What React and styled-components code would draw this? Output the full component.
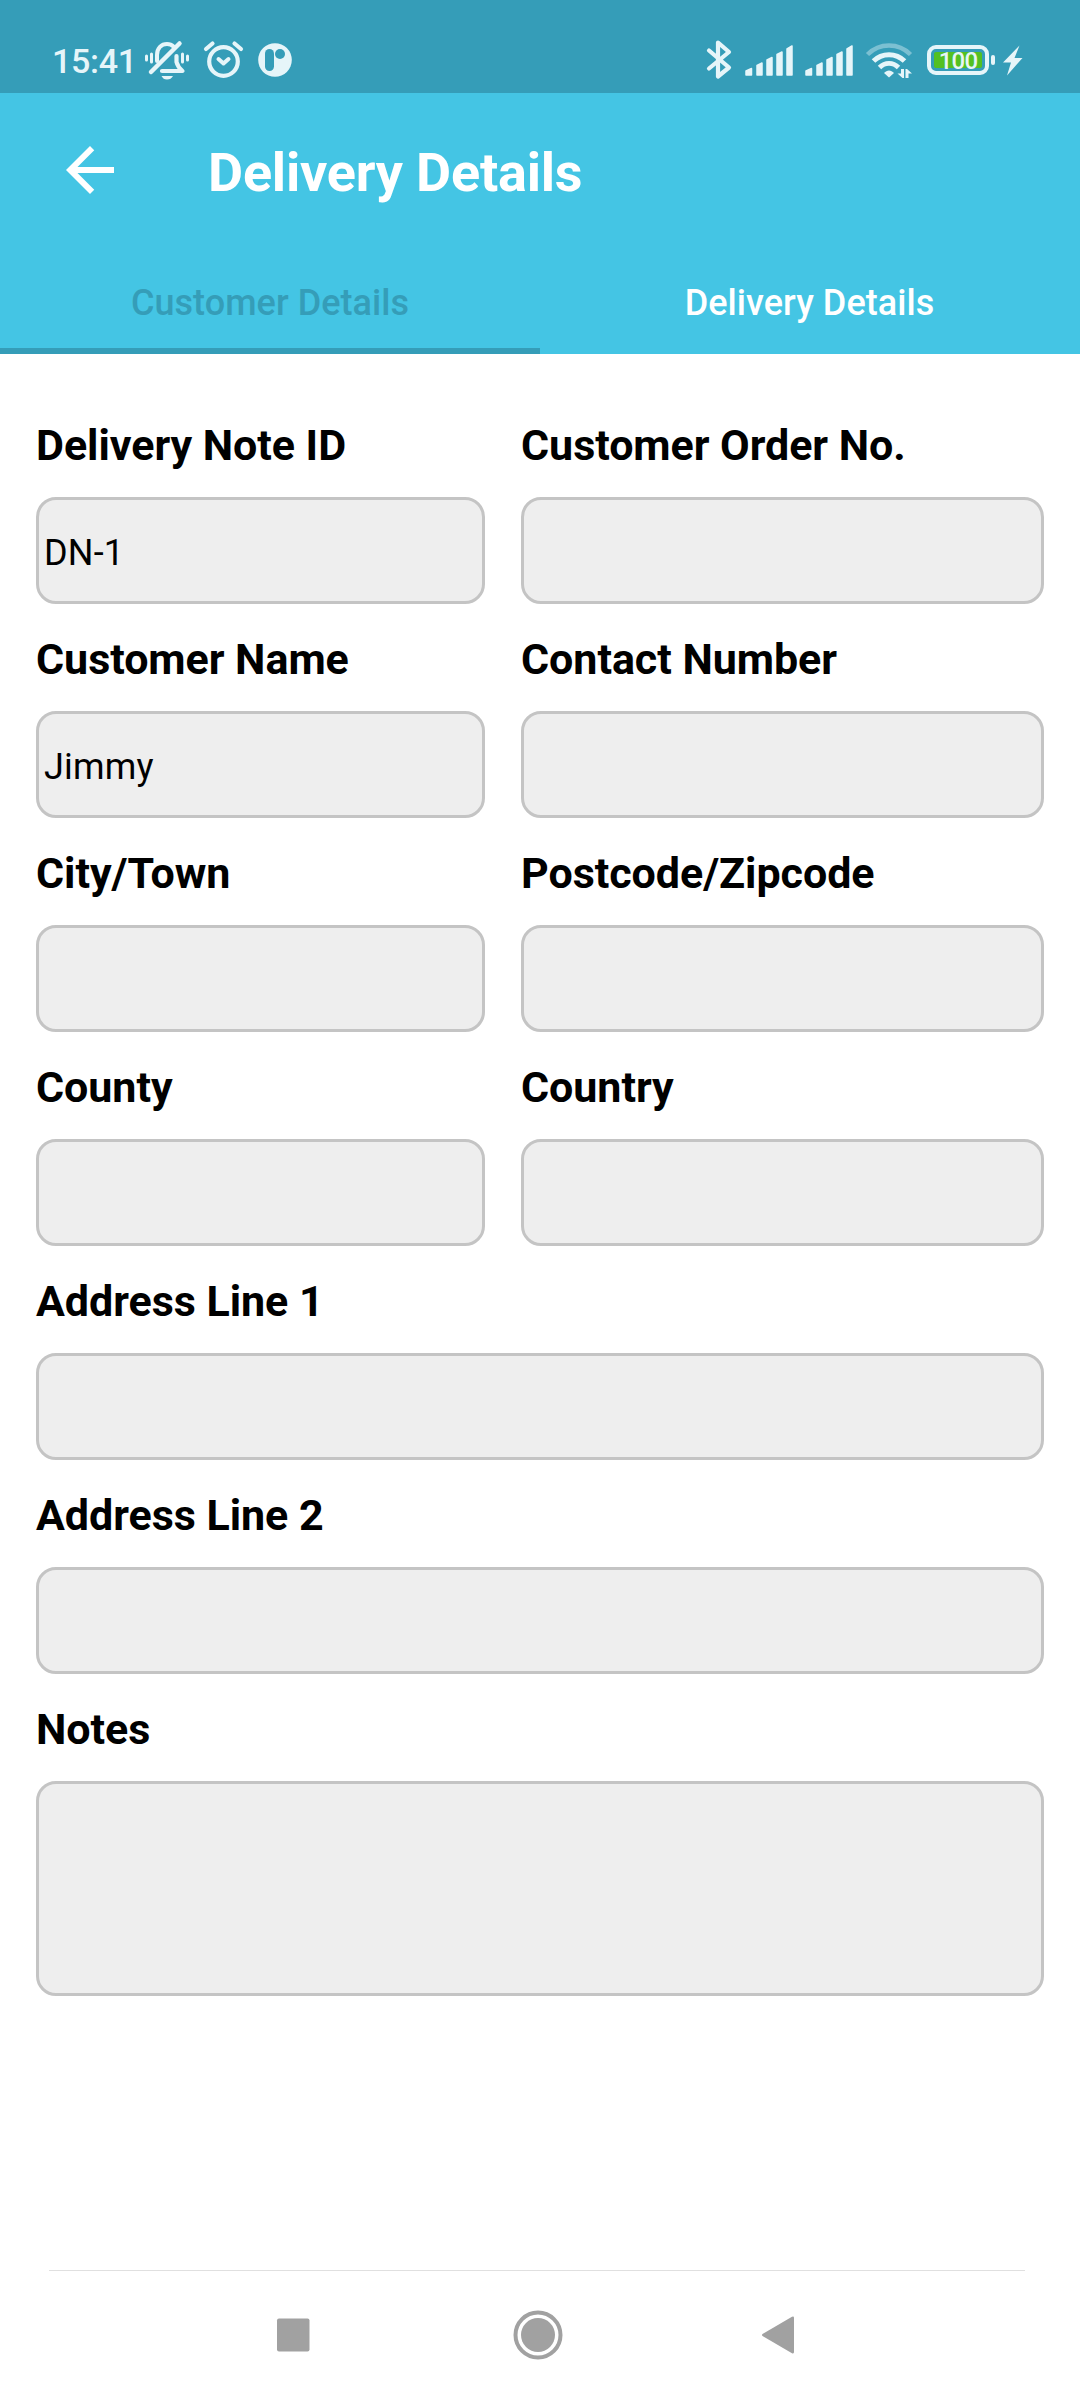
import React, {useState} from 'react'
import styled, {createGlobalStyle} from 'styled-components'

const GlobalStyle = createGlobalStyle`
  * {
    box-sizing: border-box;
  }
  body {
    margin: 0;
    background: #fff;
    font-family: Roboto, "Liberation Sans", sans-serif;
  }
`
const Screen = styled.div`
  display: flex;
  flex-direction: column;
  width: 1080px;
  height: 2400px;
  overflow: hidden;
`
const StatusBar = styled.div`
  display: flex;
  align-items: flex-start;
  justify-content: space-between;
  height: 93px;
  padding: 40px 57px 0 52px;
  background: #359db8;
  color: #e6f5f9;
`
const StatusGroup = styled.div`
  display: flex;
  align-items: flex-start;
`
const Clock = styled.span`
  width: 93px;
  font-size: 34px;
  font-weight: 500;
  line-height: 42px;
  letter-spacing: -0.3px;
`
const StatusIcon = styled.svg`
  display: block;
  flex: none;
  height: 40px;
  width: ${({$width}) => $width}px;
  margin-right: ${({$gap = 0}) => $gap}px;
  overflow: visible;
`
const Battery = styled.div`
  position: relative;
  display: flex;
  align-items: center;
  justify-content: center;
  width: 62px;
  height: 30px;
  margin: 5px 14px 0 0;
  border: 4px solid #e6f5f9;
  border-radius: 9px;

  &::after {
    content: "";
    position: absolute;
    right: -10px;
    width: 4px;
    height: 10px;
    border-radius: 2px;
    background: #e6f5f9;
  }
`
const Charge = styled.div`
  width: 48px;
  height: 16px;
  border-radius: 2px;
  background: #53c022;
  color: #e6f5f9;
  font-size: 24px;
  font-weight: 500;
  line-height: 18px;
  letter-spacing: -0.8px;
  text-align: center;
`
const Header = styled.header`
  height: 261px;
  background: #44c5e4;
  color: #fff;
`
const TitleRow = styled.div`
  display: flex;
  align-items: center;
  height: 154px;
  padding-left: 54px;
`
const BackButton = styled.button`
  display: flex;
  width: 72px;
  height: 72px;
  padding: 0;
  border: 0;
  background: none;
  color: inherit;
  cursor: pointer;
`
const Title = styled.h1`
  margin: 6px 0 0 82px;
  font-size: 54px;
  font-weight: 700;
  line-height: 64px;
  letter-spacing: -0.2px;
`
const Tabs = styled.div`
  display: flex;
  height: 107px;
`
const Tab = styled.button`
  flex: none;
  width: 50%;
  padding: 10px ${({$active}) => $active ? 0 : 1}px 0 0;
  border: 0;
  border-bottom: 6px solid ${({$active}) => $active ? '#359db8' : 'transparent'};
  background: none;
  color: ${({$active}) => $active ? '#359db8' : '#fff'};
  font-family: inherit;
  font-size: 36px;
  font-weight: 500;
  letter-spacing: 0.05px;
  cursor: pointer;
`
const Form = styled.main`
  flex: 1;
  padding: 36px 36px 0;
`
const Row = styled.div`
  display: grid;
  grid-template-columns: ${({$single}) => $single ? '1fr' : '449px 523px'};
  column-gap: 36px;
`
const Label = styled.div`
  height: 107px;
  padding-top: 3px;
  color: #000;
  font-size: 43px;
  font-weight: 700;
  line-height: 104px;
  letter-spacing: -0.04px;
  white-space: nowrap;
`
const Value = styled.div`
  display: flex;
  align-items: center;
  height: ${({$tall}) => $tall ? 215 : 107}px;
  padding: 4px 5px 0;
  border: 3px solid #c4c4c4;
  border-radius: 20px;
  background: #eee;
  color: #000;
  font-size: 36px;
  letter-spacing: 0.2px;
`
const NavBar = styled.nav`
  display: flex;
  align-items: center;
  height: 130px;
  margin: 0 55px 0 49px;
  padding: 0 230px 1px 227px;
  border-top: 1px solid #e0e0e0;
  justify-content: space-between;
  color: #a1a1a1;
`
const NavIcon = styled.svg`
  display: block;
  width: ${({$size}) => $size}px;
  height: 50px;
`

const rows = [
    [{label: 'Delivery Note ID', value: 'DN-1'}, {label: 'Customer Order No.'}],
    [{label: 'Customer Name', value: 'Jimmy'}, {label: 'Contact Number'}],
    [{label: 'City/Town'}, {label: 'Postcode/Zipcode'}],
    [{label: 'County'}, {label: 'Country'}],
    [{label: 'Address Line 1'}],
    [{label: 'Address Line 2'}],
    [{label: 'Notes', tall: true}],
]

const tabs = ['Customer Details', 'Delivery Details']

function MutedBell() {
    return (
        <StatusIcon $width={44} $gap={15} viewBox="0 0 44 40" fill="none" stroke="currentColor" strokeLinecap="round" strokeLinejoin="round">
            <path d="M12 21V15C12 8 16.500 4 22 4C25 4 27 5 28.500 6.500" strokeWidth="4"/>
            <path d="M31.500 16V22C32.500 26 34.500 28.500 37.500 31H17" strokeWidth="4.200"/>
            <path d="M6 32L34.500 3.500" strokeWidth="4.500"/>
            <path d="M1.500 16V20M6.500 14V22M37.500 14V22M42.500 16V20" strokeWidth="3"/>
            <path d="M16.500 36H28C26.500 38.500 25 39.500 22 39.500S18 38.500 16.500 36Z" fill="currentColor" stroke="none"/>
        </StatusIcon>
    )
}

function AlarmClock() {
    return (
        <StatusIcon $width={39} $gap={14.5} viewBox="0 0 39 40" fill="none" stroke="currentColor" strokeLinecap="round" strokeLinejoin="round">
            <circle cx="19.500" cy="21.500" r="14.300" strokeWidth="4.200"/>
            <path d="M14.500 19L19.500 23.500L24.500 19" strokeWidth="4"/>
            <path d="M2 9L8.500 3.500M30.500 3.500L37 9" strokeWidth="4.200"/>
        </StatusIcon>
    )
}

function AppBadge() {
    return (
        <StatusIcon $width={34} viewBox="0 0 34 40">
            <circle cx="17" cy="20" r="16.800" fill="currentColor"/>
            <rect x="7" y="9" width="9" height="22" rx="4.500" fill="#359db8"/>
            <circle cx="22" cy="14" r="5" fill="#359db8"/>
        </StatusIcon>
    )
}

function Bluetooth() {
    return (
        <StatusIcon $width={25} $gap={13} viewBox="0 0 25 40" fill="none" stroke="currentColor" strokeWidth="4.200" strokeLinecap="round" strokeLinejoin="round">
            <path d="M2 10.500L22 27.500L11 36.500V2.500L22 12L2 28.500"/>
        </StatusIcon>
    )
}

function Signal({gap}) {
    return (
        <StatusIcon $width={48} $gap={gap} viewBox="0 0 48 40" fill="currentColor" stroke="currentColor" strokeWidth="1.500" strokeLinejoin="round">
            <path d="M1 31L6.500 28.500V35H1ZM12 25.500L17 23V35H12ZM22 20L27 17.500V35H22ZM32 14.500L37 12V35H32ZM42 9L47 6V35H42Z"/>
        </StatusIcon>
    )
}

function Wifi() {
    return (
        <StatusIcon $width={47} $gap={14} viewBox="0 0 47 40" fill="none" stroke="currentColor">
            <path d="M1.500 14.500C13.500 2.500 32.500 2.500 44.500 14.500" strokeWidth="4.500" opacity="0.400"/>
            <path d="M7.500 21C16 12.500 30 12.500 38.500 21" strokeWidth="5"/>
            <path d="M13.500 27.500C19 22 27 22 32.500 27.500" strokeWidth="4.800"/>
            <path d="M18 33C21 29.500 25 29.500 28 33L23 37.500Z" fill="currentColor" stroke="none"/>
            <path d="M35 29H38V38H36.500L31.500 33.500H35ZM39.500 38V29H41L46 33.500H42.500V38Z" fill="currentColor" stroke="none"/>
        </StatusIcon>
    )
}

function Bolt() {
    return (
        <StatusIcon $width={20} viewBox="0 0 20 40">
            <path d="M16.500 5.500L0 22.500H8L4 35.500L19.500 18H11.500Z" fill="currentColor"/>
        </StatusIcon>
    )
}

function App() {
    const [activeTab, setActiveTab] = useState(0)

    return (
        <Screen>
            <GlobalStyle/>
            <StatusBar>
                <StatusGroup>
                    <Clock>15:41</Clock>
                    <MutedBell/>
                    <AlarmClock/>
                    <AppBadge/>
                </StatusGroup>
                <StatusGroup>
                    <Bluetooth/>
                    <Signal gap={12}/>
                    <Signal gap={13}/>
                    <Wifi/>
                    <Battery>
                        <Charge>100</Charge>
                    </Battery>
                    <Bolt/>
                </StatusGroup>
            </StatusBar>
            <Header>
                <TitleRow>
                    <BackButton aria-label="Back">
                        <svg width="72" height="72" viewBox="0 0 24 24" fill="currentColor">
                            <path d="M20 11H7.830l5.590-5.590L12 4l-8 8 8 8 1.410-1.410L7.830 13H20v-2z"/>
                        </svg>
                    </BackButton>
                    <Title>Delivery Details</Title>
                </TitleRow>
                <Tabs>
                    {tabs.map((tab, i) => (
                        <Tab key={tab} $active={i === activeTab} onClick={() => setActiveTab(i)}>{tab}</Tab>
                    ))}
                </Tabs>
            </Header>
            <Form>
                {rows.map((fields) => (
                    <Row key={fields[0].label} $single={fields.length === 1}>
                        {fields.map(({label, value, tall}) => (
                            <div key={label}>
                                <Label>{label}</Label>
                                <Value $tall={tall}>{value}</Value>
                            </div>
                        ))}
                    </Row>
                ))}
            </Form>
            <NavBar>
                <NavIcon $size={34} viewBox="0 0 34 50" fill="currentColor">
                    <rect x="1" y="8.500" width="32.500" height="33" rx="2"/>
                </NavIcon>
                <NavIcon $size={54} viewBox="-4 0 54 50" fill="currentColor">
                    <circle cx="25" cy="25" r="22.500" fill="none" stroke="currentColor" strokeWidth="4"/>
                    <circle cx="25" cy="25" r="17"/>
                </NavIcon>
                <NavIcon $size={34} viewBox="0 0 34 50" fill="currentColor">
                    <path d="M1.500 24L31 6.800Q33 6 33 8V42Q33 44 31 43.200L1.500 26Q0.500 25 1.500 24Z"/>
                </NavIcon>
            </NavBar>
        </Screen>
    )
}

export default App
